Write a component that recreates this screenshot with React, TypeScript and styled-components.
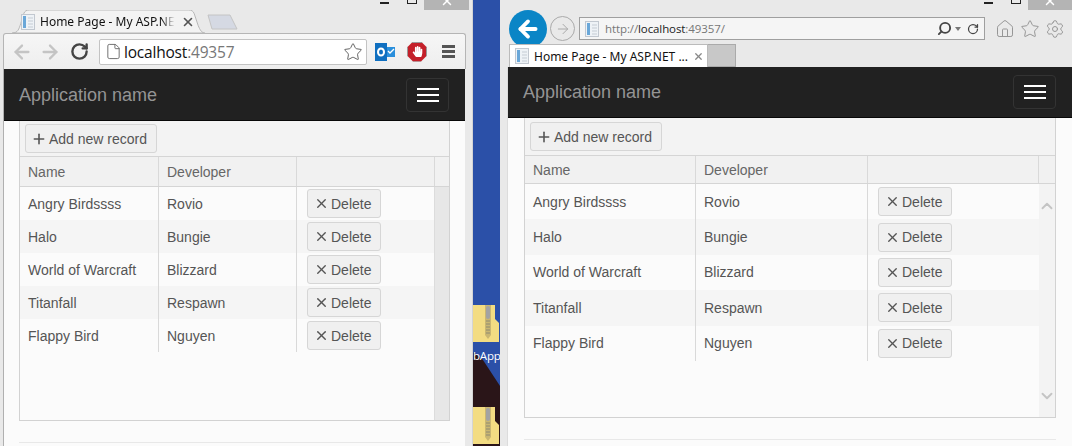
import React from "react";
import styled, { createGlobalStyle } from "styled-components";
import { ArrowLeft, ArrowRight, ChevronDown, ChevronUp, File, Home, Plus, RotateCw, Search, Settings, Star, X } from "lucide-react";
import { FaHandPaper } from "react-icons/fa";

const games = [
  ["Angry Birdssss", "Rovio"],
  ["Halo", "Bungie"],
  ["World of Warcraft", "Blizzard"],
  ["Titanfall", "Respawn"],
  ["Flappy Bird", "Nguyen"],
];

const GlobalStyle = createGlobalStyle`
  html, body { margin: 0; padding: 0; overflow: hidden; }
  body { font-family: "Liberation Sans", Arial, sans-serif; font-size: 14px; color: #555; }
`;

const Desktop = styled.div`
  display: flex;
  width: 1072px;
  height: 446px;
  overflow: hidden;
`;

const LeftWindow = styled.div`
  position: relative;
  flex: none;
  width: 473px;
  height: 446px;
  box-sizing: border-box;
  padding-right: 7px;
  background: #e9e9e9;
  border-right: 1px solid #d4d4d4;
  display: flex;
  flex-direction: column;
  overflow: hidden;
`;

const RightWindow = styled(LeftWindow)`
  width: 572px;
  padding: 0 0 0 8px;
  border-right: none;
`;

const WindowControls = styled.div<{ $right: number }>`
  position: absolute;
  top: 0;
  right: ${(p) => p.$right}px;
  display: flex;
  align-items: flex-start;
`;

const MinButton = styled.div`
  width: 9px;
  height: 2px;
  margin: 2px 18px 0 0;
  background: #222;
`;

const MaxButton = styled.div`
  width: 8px;
  height: 3px;
  margin-right: 7px;
  border: 1px solid #222;
  border-top: none;
`;

const CloseButton = styled.div<{ $width: number }>`
  width: ${(p) => p.$width}px;
  height: 10px;
  background: #b4b4b4;
  display: flex;
  justify-content: center;
  overflow: hidden;
  color: #fff;
  & > svg {
    margin-top: -6px;
  }
`;

/* left window: chrome */
const TabStrip = styled.div`
  height: 33px;
  display: flex;
  align-items: flex-end;
  padding-left: 8px;
  flex: none;
`;

const ChromeTab = styled.div`
  position: relative;
  width: 201px;
  height: 23px;
  display: flex;
  align-items: center;
  padding-left: 13px;
  box-sizing: border-box;
  font: 12px "Noto Sans", sans-serif;
  color: #111;
`;

const TabShape = styled.svg`
  position: absolute;
  left: 0;
  top: 0;
`;

const TabLabel = styled.span`
  position: relative;
  margin-left: 5px;
  width: 135px;
  white-space: nowrap;
  overflow: hidden;
  -webkit-mask-image: linear-gradient(to right, #000 90%, transparent);
  mask-image: linear-gradient(to right, #000 90%, transparent);
`;

const TabClose = styled(X)`
  position: relative;
  margin-left: 6px;
  color: #555;
`;

const NewTab = styled.svg`
  margin: 0 0 3px -4px;
  flex: none;
`;

const ChromeBar = styled.div`
  flex: none;
  height: 36px;
  margin: 0 -1px 0 3px;
  box-sizing: border-box;
  background: linear-gradient(to bottom, #f6f6f6, #eeeeee);
  border: 1px solid #b5b5b5;
  border-bottom: none;
  border-radius: 3px 3px 0 0;
  display: flex;
  align-items: center;
  padding: 0 7px;
  color: #c4c4c4;
`;

const NavSlot = styled.div<{ $width: number }>`
  width: ${(p) => p.$width}px;
  flex: none;
  display: flex;
`;

const Omnibox = styled.div`
  width: 268px;
  height: 26px;
  flex: none;
  box-sizing: border-box;
  background: #fff;
  border: 1px solid #c3c3c3;
  border-radius: 2px;
  display: flex;
  align-items: center;
  padding: 0 3px 0 5px;
  color: #666;
`;

const OmniText = styled.div`
  flex: 1;
  margin-left: 2px;
  font: 15.5px "Open Sans", sans-serif;
  letter-spacing: -0.2px;
  color: #111;
`;

const Muted = styled.span`
  color: #777;
`;

const ExtensionSlot = styled.div<{ $left: number }>`
  margin-left: ${(p) => p.$left}px;
  flex: none;
  display: flex;
  align-items: center;
`;

const StopIcon = styled.div`
  width: 20px;
  height: 20px;
  background: #c4202a;
  border: 1px solid #999;
  box-sizing: border-box;
  clip-path: polygon(30% 0, 70% 0, 100% 30%, 100% 70%, 70% 100%, 30% 100%, 0 70%, 0 30%);
  color: #fff;
  display: flex;
  align-items: center;
  justify-content: center;
`;

const ChromeMenu = styled.div`
  width: 13px;
  height: 13px;
  display: flex;
  flex-direction: column;
  justify-content: space-between;
  & > i {
    display: block;
    height: 3px;
    background: #555;
  }
`;

/* right window: internet explorer */
const IeTop = styled.div`
  flex: none;
  height: 44px;
  display: flex;
  align-items: center;
  padding-top: 13px;
  box-sizing: border-box;
`;

const BackCircle = styled.div`
  width: 38px;
  height: 38px;
  margin-left: 1px;
  border-radius: 50%;
  background: #0a85c6;
  color: #fff;
  display: flex;
  align-items: center;
  justify-content: center;
  flex: none;
`;

const ForwardCircle = styled.div`
  width: 25px;
  height: 25px;
  margin-left: 3px;
  border-radius: 50%;
  border: 1px solid #aaa;
  box-sizing: border-box;
  color: #aaa;
  display: flex;
  align-items: center;
  justify-content: center;
  flex: none;
`;

const IeAddress = styled.div`
  width: 406px;
  height: 23px;
  margin-left: 4px;
  box-sizing: border-box;
  flex: none;
  background: #f5f5f5;
  border: 1px solid #9f9f9f;
  display: flex;
  align-items: center;
  padding: 0 5px;
  gap: 6px;
  color: #444;
`;

const FavIcon = styled.svg`
  flex: none;
  position: relative;
`;

const IeUrl = styled.div`
  flex: 1;
  font: 11.5px "Open Sans", sans-serif;
  letter-spacing: -0.1px;
  color: #777;
`;

const Strong = styled.span`
  color: #222;
`;

const DropCaret = styled.div`
  width: 0;
  height: 0;
  margin: 0 0 0 -3px;
  border: 3px solid transparent;
  border-top: 4px solid #777;
  border-bottom: none;
`;

const IeTools = styled.div`
  margin-left: 10px;
  display: flex;
  gap: 5px;
  color: #969696;
`;

const IeTabs = styled.div`
  flex: none;
  height: 23px;
  display: flex;
  padding-left: 1px;
`;

const IeTab = styled.div`
  width: 199px;
  height: 23px;
  box-sizing: border-box;
  background: #fff;
  border: 1px solid #bbb;
  border-bottom: none;
  display: flex;
  align-items: center;
  padding: 0 3px 0 5px;
  gap: 5px;
  font: 12px "Noto Sans", sans-serif;
  color: #111;
  white-space: nowrap;
  & > svg:last-child {
    margin-left: auto;
    color: #888;
  }
`;

const IeNewTab = styled.div`
  width: 28px;
  height: 23px;
  box-sizing: border-box;
  background: #c8c8c8;
  border: 1px solid #aaa;
  border-left: none;
`;

/* page inside both browsers */
const Page = styled.div<{ $inset: number; $edge: string }>`
  flex: 1;
  min-height: 0;
  background: #fbfbfb;
  margin-left: ${(p) => p.$inset}px;
  border-left: 1px solid ${(p) => p.$edge};
  display: flex;
  flex-direction: column;
`;

const Navbar = styled.div<{ $height: number }>`
  flex: none;
  height: ${(p) => p.$height}px;
  box-sizing: border-box;
  background: #212121;
  border-bottom: 1px solid #080808;
  display: flex;
  align-items: center;
  justify-content: space-between;
  padding: 0 16px 0 15px;
`;

const Brand = styled.div`
  padding-top: 1px;
  font-size: 18px;
  color: #949494;
`;

const Toggle = styled.div`
  width: 43px;
  height: 34px;
  box-sizing: border-box;
  border: 1px solid #333;
  border-radius: 4px;
  display: flex;
  flex-direction: column;
  justify-content: center;
  align-items: center;
  gap: 4px;
  & > i {
    display: block;
    width: 22px;
    height: 2px;
    background: #fff;
  }
`;

const Content = styled.div<{ $gutter: number }>`
  flex: 1;
  padding: 0 ${(p) => p.$gutter}px;
`;

const Grid = styled.div`
  height: 300px;
  box-sizing: border-box;
  border: 1px solid #d2d2d2;
  border-top: none;
  display: flex;
  flex-direction: column;
`;

const GridToolbar = styled.div<{ $height: number; $top: number }>`
  flex: none;
  height: ${(p) => p.$height}px;
  box-sizing: border-box;
  padding: ${(p) => p.$top}px 0 0 5px;
  background: #f3f3f3;
  border-bottom: 1px solid #d5d5d5;
`;

const GridButton = styled.div<{ $width: number; $pad: number }>`
  display: inline-flex;
  align-items: center;
  gap: 2px;
  width: ${(p) => p.$width}px;
  height: 29px;
  box-sizing: border-box;
  padding-left: ${(p) => p.$pad}px;
  background: #f0f0f0;
  border: 1px solid #d6d6d6;
  border-radius: 3px;
  color: #555;
  font-size: 14px;
`;

const Row = styled.div<{ $cols: string; $height: number; $alt?: boolean }>`
  display: grid;
  grid-template-columns: ${(p) => p.$cols};
  height: ${(p) => p.$height}px;
  background: ${(p) => (p.$alt ? "#f5f5f5" : "transparent")};
`;

const HeaderRow = styled(Row)`
  background: #f1f1f1;
  border-bottom: 1px solid #d5d5d5;
  box-sizing: border-box;
`;

const Cell = styled.div`
  display: flex;
  align-items: center;
  padding-left: 8px;
  border-right: 1px solid #d9d9d9;
  min-width: 0;
  white-space: nowrap;
`;

const ActionCell = styled(Cell)`
  padding-left: 10px;
  border-right: none;
`;

const HeaderCell = styled(Cell)`
  color: #666;
  &:last-child {
    border-right: none;
  }
`;

const GridBody = styled.div`
  flex: 1;
  min-height: 0;
  display: flex;
`;

const Rows = styled.div`
  flex: 1;
  min-width: 0;
`;

const Scrollbar = styled.div<{ $width: number; $light?: boolean }>`
  flex: none;
  width: ${(p) => p.$width}px;
  background: ${(p) => (p.$light ? "#f3f3f3" : "#e7e7e7")};
  border-left: ${(p) => (p.$light ? "none" : "1px solid #dcdcdc")};
  box-sizing: border-box;
  display: flex;
  flex-direction: column;
  justify-content: space-between;
  align-items: center;
  padding: 13px 0 12px;
  color: #c4c4c4;
`;

const Rule = styled.div<{ $top: number }>`
  margin-top: ${(p) => p.$top}px;
  border-top: 1px solid #e8e8e8;
`;

/* strip of desktop between the two windows */
const Wallpaper = styled.div`
  position: relative;
  flex: none;
  width: 27px;
  height: 446px;
  background: #2b50a8;
  display: flex;
  flex-direction: column;
  align-items: flex-start;
  overflow: hidden;
`;

const Mountain = styled.svg`
  position: absolute;
  left: 0;
  bottom: 0;
`;

const ZipFolder = styled.svg<{ $top: number }>`
  position: relative;
  margin-top: ${(p) => p.$top}px;
  flex: none;
`;

const FolderLabel = styled.div`
  position: relative;
  margin-top: 7px;
  font: 11.5px "Open Sans", sans-serif;
  letter-spacing: -0.2px;
  line-height: 14px;
  color: #fff;
  white-space: nowrap;
`;

type Metrics = {
  inset: number;
  edge: string;
  navHeight: number;
  gutter: number;
  cols: string;
  rowHeight: number;
  toolbarHeight: number;
  toolbarTop: number;
  headerHeight: number;
  scrollWidth: number;
  light?: boolean;
};

function DocFavicon() {
  return (
    <FavIcon width="14" height="16" viewBox="0 0 14 16">
      <rect x="0.5" y="0.5" width="13" height="15" fill="#eef2f6" stroke="#c2c8d0" />
      <rect x="2" y="2" width="3" height="12" fill="#6aa7d8" />
      <path d="M7 4h5M7 7h5M7 10h5M7 13h5" stroke="#c5ccd4" />
    </FavIcon>
  );
}

function ZipIcon({ top, height }: { top: number; height: number }) {
  return (
    <ZipFolder $top={top} width="27" height={height} viewBox={`0 0 27 ${height}`}>
      <path d="M0 0 H22 V14 L26 18 V37 H0 Z" fill="#f3dc82" />
      <path d="M12 0 H18 V30 L15 34 L12 30 Z" fill="#c9b672" />
      <rect x="13" y="1" width="4" height="13" rx="2" fill="#a3a3a3" />
      <path d="M13 16 H17 M13 19 H17 M13 22 H17 M13 25 H17 M13 28 H17" stroke="#8e8a72" />
    </ZipFolder>
  );
}

function GridPage({ m }: { m: Metrics }) {
  return (
    <Page $inset={m.inset} $edge={m.edge}>
      <Navbar $height={m.navHeight}>
        <Brand>Application name</Brand>
        <Toggle>
          <i />
          <i />
          <i />
        </Toggle>
      </Navbar>
      <Content $gutter={m.gutter}>
        <Grid>
          <GridToolbar $height={m.toolbarHeight} $top={m.toolbarTop}>
            <GridButton $width={132} $pad={5}>
              <Plus size={16} strokeWidth={2.4} />
              Add new record
            </GridButton>
          </GridToolbar>
          <HeaderRow $cols={m.cols} $height={m.headerHeight}>
            <HeaderCell>Name</HeaderCell>
            <HeaderCell>Developer</HeaderCell>
            <HeaderCell />
            <HeaderCell />
          </HeaderRow>
          <GridBody>
            <Rows>
              {games.map(([name, developer], i) => (
                <Row key={name} $cols={m.cols} $height={m.rowHeight} $alt={i % 2 === 1}>
                  <Cell>{name}</Cell>
                  <Cell>{developer}</Cell>
                  <ActionCell>
                    <GridButton $width={74} $pad={6}>
                      <X size={15} strokeWidth={2.2} />
                      Delete
                    </GridButton>
                  </ActionCell>
                </Row>
              ))}
            </Rows>
            <Scrollbar $width={m.scrollWidth} $light={m.light}>
              {m.light && <ChevronUp size={18} strokeWidth={2.5} />}
              {m.light && <ChevronDown size={18} strokeWidth={2.5} />}
            </Scrollbar>
          </GridBody>
        </Grid>
        <Rule $top={21} />
      </Content>
    </Page>
  );
}

export default function App() {
  return (
    <Desktop>
      <GlobalStyle />
      <LeftWindow>
        <TabStrip>
          <ChromeTab>
            <TabShape width="201" height="23" viewBox="0 0 201 24">
              <path d="M0 24 C6 24 7 20 9 14 L12 4 C13 1 15 0 18 0 H184 C187 0 189 1 190 4 L194 16 C196 21 198 24 201 24 Z" fill="#f3f3f3" stroke="#b5b5b5" />
            </TabShape>
            <DocFavicon />
            <TabLabel>Home Page - My ASP.NET</TabLabel>
            <TabClose size={14} strokeWidth={2.8} />
          </ChromeTab>
          <NewTab width="34" height="16" viewBox="0 0 34 16">
            <path d="M3 1 H25 L32 15 H7 Z" fill="#d5d9e3" stroke="#c4c4c4" />
          </NewTab>
        </TabStrip>
        <ChromeBar>
          <NavSlot $width={28}>
            <ArrowLeft size={22} strokeWidth={2.5} />
          </NavSlot>
          <NavSlot $width={31}>
            <ArrowRight size={22} strokeWidth={2.5} />
          </NavSlot>
          <NavSlot $width={29}>
            <RotateCw size={19} strokeWidth={3} color="#444" />
          </NavSlot>
          <Omnibox>
            <File size={17} strokeWidth={1.3} />
            <OmniText>
              localhost<Muted>:49357</Muted>
            </OmniText>
            <Star size={20} strokeWidth={1.2} />
          </Omnibox>
          <ExtensionSlot $left={8}>
            <svg width="20" height="20" viewBox="0 0 20 20">
              <rect x="0" y="1" width="12" height="18" fill="#0f6fc0" />
              <rect x="12" y="5" width="8" height="10" fill="#2a8fdc" />
              <ellipse cx="6" cy="10" rx="3" ry="3.6" fill="none" stroke="#fff" strokeWidth="2" />
              <path d="M13 9l2 2 4-4" fill="none" stroke="#fff" strokeWidth="1.3" />
            </svg>
          </ExtensionSlot>
          <ExtensionSlot $left={12}>
            <StopIcon>
              <FaHandPaper size={11} />
            </StopIcon>
          </ExtensionSlot>
          <ExtensionSlot $left={15}>
            <ChromeMenu>
              <i />
              <i />
              <i />
            </ChromeMenu>
          </ExtensionSlot>
        </ChromeBar>
        <GridPage
          m={{
            inset: 3,
            edge: "#b0b0b0",
            navHeight: 52,
            gutter: 15,
            cols: "139px 138px 138px 14px",
            rowHeight: 33,
            toolbarHeight: 36,
            toolbarTop: 3,
            headerHeight: 30,
            scrollWidth: 15,
          }}
        />
        <WindowControls $right={3}>
          <MinButton />
          <MaxButton />
          <CloseButton $width={45}>
            <X size={14} strokeWidth={2.5} />
          </CloseButton>
        </WindowControls>
      </LeftWindow>
      <Wallpaper>
        <Mountain width="27" height="100" viewBox="0 0 27 100">
          <path d="M0 6 L10 14 L27 40 V100 H0 Z" fill="#2a1518" />
        </Mountain>
        <ZipIcon top={305} height={37} />
        <FolderLabel>bApp</FolderLabel>
        <ZipIcon top={44} height={39} />
      </Wallpaper>
      <RightWindow>
        <IeTop>
          <BackCircle>
            <ArrowLeft size={26} strokeWidth={3.5} />
          </BackCircle>
          <ForwardCircle>
            <ArrowRight size={16} strokeWidth={1.5} />
          </ForwardCircle>
          <IeAddress>
            <DocFavicon />
            <IeUrl>
              http://<Strong>localhost</Strong>:49357/
            </IeUrl>
            <Search size={15} strokeWidth={3} style={{ transform: "scaleX(-1)" }} />
            <DropCaret />
            <RotateCw size={12} strokeWidth={2.5} />
          </IeAddress>
          <IeTools>
            <Home size={20} strokeWidth={1.2} />
            <Star size={20} strokeWidth={1.2} />
            <Settings size={20} strokeWidth={1.2} />
          </IeTools>
        </IeTop>
        <IeTabs>
          <IeTab>
            <DocFavicon />
            Home Page - My ASP.NET ...
            <X size={15} strokeWidth={2.8} />
          </IeTab>
          <IeNewTab />
        </IeTabs>
        <GridPage
          m={{
            inset: -1,
            edge: "#dcdcdc",
            navHeight: 51,
            gutter: 16,
            cols: "171px 172px 171px 16px",
            rowHeight: 35.4,
            toolbarHeight: 38,
            toolbarTop: 4,
            headerHeight: 28,
            scrollWidth: 16,
            light: true,
          }}
        />
        <WindowControls $right={0}>
          <MinButton />
          <MaxButton />
          <CloseButton $width={44}>
            <X size={14} strokeWidth={2.5} />
          </CloseButton>
        </WindowControls>
      </RightWindow>
    </Desktop>
  );
}
